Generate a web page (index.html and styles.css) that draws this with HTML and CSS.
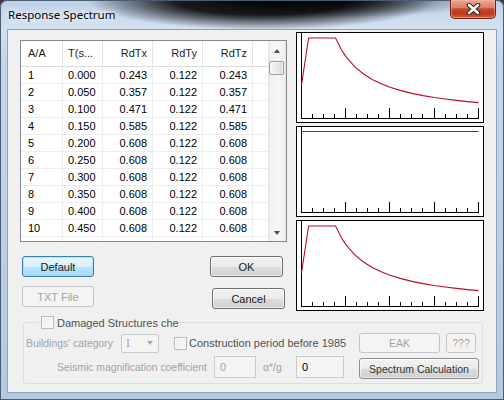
FILE: index.html
```html
<!DOCTYPE html>
<html lang="en">
<head>
  <meta charset="UTF-8" />
  <title>Response Spectrum</title>
  <link rel="stylesheet" href="styles.css">
</head>
<body>

<div class="window">
  <div class="titlebar">
    <span class="title">Response Spectrum</span>
    <div class="close-btn">
      <svg width="15" height="12" viewBox="0 0 15 12">
        <path d="M3 2 L12 10 M12 2 L3 10" stroke="#3b1a12" stroke-width="4.6" stroke-linecap="round"/>
        <path d="M3 2 L12 10 M12 2 L3 10" stroke="#fff" stroke-width="2.6" stroke-linecap="round"/>
      </svg>
    </div>
  </div>

  <div class="client">
    <div class="upper">
      <div class="left-col">

        <!-- spectrum values -->
        <div class="grid">
          <div class="grid-body">
            <div class="row head"><span>A/A</span><span>T(s...</span><span class="r">RdTx</span><span class="r">RdTy</span><span class="r">RdTz</span><span></span></div>
            <div class="row"><span>1</span><span>0.000</span><span class="r">0.243</span><span class="r">0.122</span><span class="r">0.243</span><span></span></div>
            <div class="row"><span>2</span><span>0.050</span><span class="r">0.357</span><span class="r">0.122</span><span class="r">0.357</span><span></span></div>
            <div class="row"><span>3</span><span>0.100</span><span class="r">0.471</span><span class="r">0.122</span><span class="r">0.471</span><span></span></div>
            <div class="row"><span>4</span><span>0.150</span><span class="r">0.585</span><span class="r">0.122</span><span class="r">0.585</span><span></span></div>
            <div class="row"><span>5</span><span>0.200</span><span class="r">0.608</span><span class="r">0.122</span><span class="r">0.608</span><span></span></div>
            <div class="row"><span>6</span><span>0.250</span><span class="r">0.608</span><span class="r">0.122</span><span class="r">0.608</span><span></span></div>
            <div class="row"><span>7</span><span>0.300</span><span class="r">0.608</span><span class="r">0.122</span><span class="r">0.608</span><span></span></div>
            <div class="row"><span>8</span><span>0.350</span><span class="r">0.608</span><span class="r">0.122</span><span class="r">0.608</span><span></span></div>
            <div class="row"><span>9</span><span>0.400</span><span class="r">0.608</span><span class="r">0.122</span><span class="r">0.608</span><span></span></div>
            <div class="row"><span>10</span><span>0.450</span><span class="r">0.608</span><span class="r">0.122</span><span class="r">0.608</span><span></span></div>
            <div class="row"><span></span><span></span><span></span><span></span><span></span><span></span></div>
          </div>
          <div class="vscroll">
            <div class="sb-btn"><span class="arrow-up"></span></div>
            <div class="thumb"></div>
            <div class="sb-track"></div>
            <div class="sb-btn"><span class="arrow-down"></span></div>
          </div>
        </div>

        <div class="btn-area">
          <div class="btn-col">
            <button class="btn default">Default</button>
            <button class="btn" disabled>TXT File</button>
          </div>
          <div class="btn-col right">
            <button class="btn ok">OK</button>
            <button class="btn cancel">Cancel</button>
          </div>
        </div>
      </div>

      <!-- plots: RdTx, RdTy, RdTz -->
      <div class="charts">
        <div class="chart">
          <svg width="186" height="89" viewBox="0 0 186 89">
            <path class="axis" d="M4.5 0V85.5H182"/>
            <path class="axis" d="M15.5 81V85M26.5 81V85M37.5 81V85M59.5 81V85M70.5 81V85M81.5 81V85M103.5 81V85M114.5 81V85M125.5 81V85M148.5 81V85M159.5 81V85M170.5 81V85"/>
            <path class="axis" d="M48.5 75V85M92.5 75V85M137.5 75V85M181.5 75V85"/>
            <polyline class="curve" points="4.5,52 11.6,5 38.6,5 44.3,16.5 48.75,23.4 57.6,33.7 66.45,41 75.3,46.5 84.15,50.8 93,54.2 104.1,57.6 115.1,60.4 126.2,62.6 137.25,64.5 148.3,66 159.4,67.4 170.4,68.6 181.5,69.6"/>
          </svg>
        </div>
        <div class="chart">
          <svg width="186" height="89" viewBox="0 0 186 89">
            <path class="axis" d="M4.5 0V85.5H182"/>
            <path class="axis" d="M15.5 81V85M26.5 81V85M37.5 81V85M59.5 81V85M70.5 81V85M81.5 81V85M103.5 81V85M114.5 81V85M125.5 81V85M148.5 81V85M159.5 81V85M170.5 81V85"/>
            <path class="axis" d="M48.5 75V85M92.5 75V85M137.5 75V85M181.5 75V85"/>
            <path class="curve" d="M4.5 4.5H181.5"/>
          </svg>
        </div>
        <div class="chart">
          <svg width="186" height="89" viewBox="0 0 186 89">
            <path class="axis" d="M4.5 0V85.5H182"/>
            <path class="axis" d="M15.5 81V85M26.5 81V85M37.5 81V85M59.5 81V85M70.5 81V85M81.5 81V85M103.5 81V85M114.5 81V85M125.5 81V85M148.5 81V85M159.5 81V85M170.5 81V85"/>
            <path class="axis" d="M48.5 75V85M92.5 75V85M137.5 75V85M181.5 75V85"/>
            <polyline class="curve" points="4.5,52 11.6,5 38.6,5 44.3,16.5 48.75,23.4 57.6,33.7 66.45,41 75.3,46.5 84.15,50.8 93,54.2 104.1,57.6 115.1,60.4 126.2,62.6 137.25,64.5 148.3,66 159.4,67.4 170.4,68.6 181.5,69.6"/>
          </svg>
        </div>
      </div>
    </div>

    <fieldset class="group">
      <legend><span class="check"></span><span class="legend-text">Damaged Structures che</span></legend>
      <div class="group-body">
        <div class="group-left">
          <div class="g-row first">
            <span class="lbl dis cat">Buildings' category</span>
            <div class="combo"><span>I</span><span class="combo-arrow"></span></div>
            <span class="check cp"></span>
            <span class="lbl">Construction period before 1985</span>
          </div>
          <div class="g-row second">
            <span class="lbl dis coef">Seismic magnification coefficient</span>
            <div class="field dis f1">0</div>
            <span class="lbl dis ag">α*/g</span>
            <div class="field f2">0</div>
          </div>
        </div>
        <div class="group-right">
          <div class="g-row first">
            <button class="btn small eak" disabled>EAK</button>
            <button class="btn small qq" disabled>???</button>
          </div>
          <div class="g-row second">
            <button class="btn small calc">Spectrum Calculation</button>
          </div>
        </div>
      </div>
    </fieldset>
  </div>
</div>

</body>
</html>
```

FILE: styles.css
```css
body {
  margin: 0;
  background: #3a3a3a;
  font-family: "Liberation Sans", Arial, sans-serif;
  font-size: 11px;
}

.window {
  width: 504px;
  height: 400px;
  box-sizing: border-box;
  padding: 0 7px 7px;
  border-radius: 7px 7px 0 0;
  overflow: hidden;
  background:
    radial-gradient(ellipse 175px 30px at 262px 0, rgba(0,0,0,.97) 0%, rgba(0,0,0,.88) 50%, rgba(0,0,0,0) 100%),
    radial-gradient(ellipse 140px 18px at 340px 0, rgba(0,0,0,.75) 0%, rgba(0,0,0,0) 100%),
    linear-gradient(to bottom, #bdd0e6 0, #d3e1f1 27px, #c3d6eb 60px, #b3c9e2 100%);
  box-shadow: inset 0 0 0 1px #4b5d73;
}

/* title bar */
.titlebar {
  height: 29px;
  display: flex;
  align-items: flex-start;
}

.title {
  margin: 7px 0 0 1px;
  font-family: "Noto Sans", sans-serif;
  font-size: 11.5px;
  color: #000;
  text-shadow: 0 0 8px #fff, 0 0 5px rgba(255,255,255,.9);
}

.close-btn {
  margin-left: auto;
  margin-right: 1px;
  width: 46px;
  height: 19px;
  box-sizing: border-box;
  border: 1px solid #6b2416;
  border-top: none;
  border-radius: 0 0 5px 5px;
  background: linear-gradient(#e9a895 0%, #d9806a 42%, #c6452a 50%, #bf3a1e 78%, #d5633e 100%);
  box-shadow: inset 0 0 0 1px rgba(255,190,170,.45);
  display: flex;
  align-items: center;
  justify-content: center;
}

/* client area */
.client {
  height: 364px;
  box-sizing: border-box;
  border: 1px solid #8ea3bb;
  background: #f0f0f0;
}

.upper {
  display: flex;
  align-items: flex-start;
}

.left-col {
  width: 267px;
  margin: 10px 0 0 12px;
}

/* list */
.grid {
  width: 267px;
  height: 202px;
  box-sizing: border-box;
  border: 1px solid #828790;
  background: #fff;
  display: flex;
}

.grid-body {
  width: 247px;
  overflow: hidden;
}

.row {
  display: grid;
  grid-template-columns: 42px 40px 50px 50px 50px 15px;
  height: 17px;
  box-sizing: border-box;
  border-bottom: 1px solid #ededed;
  color: #000;
}

.row > span {
  border-right: 1px solid #ededed;
  padding: 0 5px;
  line-height: 16px;
  white-space: nowrap;
  overflow: hidden;
}

.row > span:first-child {
  padding-left: 7px;
}

.row > span:last-child {
  border-right: none;
}

.row .r {
  text-align: right;
}

.row.head {
  height: 26px;
  border-bottom-color: #dcdcdc;
  color: #1e1e1e;
}

.row.head > span {
  line-height: 25px;
  border-right-color: #e5e5e5;
}

.vscroll {
  width: 18px;
  display: flex;
  flex-direction: column;
  background: linear-gradient(to right, #e4e4e4, #f1f1f1 2px, #f6f6f6 50%, #f1f1f1 16px, #e4e4e4);
}

.sb-btn {
  height: 17px;
  display: flex;
  align-items: center;
  justify-content: center;
}

.arrow-up, .arrow-down {
  width: 0;
  height: 0;
  border-left: 3.5px solid transparent;
  border-right: 3.5px solid transparent;
}

.arrow-up {
  border-bottom: 4px solid #4d4d4d;
  margin-top: 3px;
}

.arrow-down {
  border-top: 4px solid #4d4d4d;
}

.thumb {
  width: 15px;
  height: 14px;
  margin: 3px 0 0 1px;
  box-sizing: border-box;
  border: 1px solid #979797;
  border-radius: 2px;
  background: linear-gradient(to right, #f6f6f6, #e9e9e9 50%, #d9d9d9);
  box-shadow: inset 0 0 0 1px rgba(255,255,255,.7);
}

.sb-track {
  flex: 1;
}

/* buttons */
.btn {
  box-sizing: border-box;
  height: 21px;
  padding: 0;
  border: 1px solid #707070;
  border-radius: 3px;
  background: linear-gradient(#f2f2f2 0%, #ebebeb 50%, #dddddd 51%, #cfcfcf 100%);
  box-shadow: inset 0 0 0 1px rgba(255,255,255,.6);
  font-family: "Liberation Sans", Arial, sans-serif;
  font-size: 11px;
  color: #1a1a1a;
}

.btn.default {
  border-color: #3c7fb1;
  background: linear-gradient(#eaf6fd 0%, #d9f0fc 50%, #bee6fd 51%, #a7d9f5 100%);
  box-shadow: inset 0 0 0 1px rgba(140,220,250,.6);
}

.btn:disabled {
  border-color: #c2c5c8;
  background: #f4f4f4;
  box-shadow: none;
  color: #a3a3a3;
}

.btn-area {
  display: flex;
  margin-top: 14px;
}

.btn-col {
  display: flex;
  flex-direction: column;
  gap: 9px;
  margin-left: 2px;
}

.btn-col .btn {
  width: 72px;
}

.btn-col.right {
  margin-left: 116px;
  gap: 11px;
}

.btn-col.right .btn {
  width: 73px;
}

.btn.cancel {
  margin-left: 2px;
}

/* plots */
.charts {
  display: flex;
  flex-direction: column;
  gap: 3px;
  margin: 2px 0 0 9px;
}

.chart {
  width: 188px;
  height: 91px;
  box-sizing: border-box;
  border: 1px solid #000;
  background: #fff;
}

.chart svg {
  display: block;
}

.axis {
  fill: none;
  stroke: #000;
  stroke-width: 1;
  shape-rendering: crispEdges;
}

.curve {
  fill: none;
  stroke: #b80d26;
  stroke-width: 1.1;
}

/* damaged structures group */
.group {
  width: 460px;
  box-sizing: border-box;
  margin: 5px 0 0 15px;
  padding: 4px 0 5px 0;
  border: 1px solid #d5dfe5;
  border-radius: 3px;
  min-inline-size: 0;
}

.group legend {
  width: 134px;
  margin-left: 15px;
  padding: 0 2px;
  height: 13px;
  display: flex;
  align-items: center;
  white-space: nowrap;
}

.legend-text {
  margin-left: 3px;
  color: #505050;
}

.check {
  flex: none;
  width: 13px;
  height: 13px;
  box-sizing: border-box;
  border: 1px solid #bcbcbc;
  background: linear-gradient(135deg, #ececec, #fafafa);
  box-shadow: inset 0 0 0 1px #f7f7f7;
}

.group-body {
  display: flex;
}

.group-left {
  width: 335px;
}

.group-right {
  width: 120px;
}

.g-row {
  display: flex;
  align-items: center;
}

.g-row.first {
  height: 20px;
}

.g-row.second {
  height: 22px;
  margin-top: 3px;
}

.lbl {
  color: #505050;
  white-space: nowrap;
}

.lbl.dis {
  color: #a3a3a3;
  font-size: 10.4px;
}

.lbl.cat {
  width: 95px;
  margin-left: 2px;
}

.combo {
  width: 38px;
  height: 19px;
  box-sizing: border-box;
  border: 1px solid #c9c9c9;
  border-radius: 2px;
  background: #f4f4f4;
  display: flex;
  align-items: center;
  justify-content: space-between;
  padding: 0 5px 0 4px;
  font-family: "Liberation Serif", serif;
  font-size: 12px;
  color: #a3a3a3;
}

.combo-arrow {
  width: 0;
  height: 0;
  border-left: 3.5px solid transparent;
  border-right: 3.5px solid transparent;
  border-top: 4px solid #a8a8a8;
}

.check.cp {
  margin-left: 15px;
  margin-right: 2px;
}

.lbl.coef {
  width: 183px;
  text-align: right;
}

.field {
  height: 22px;
  box-sizing: border-box;
  border: 1px solid #cccccc;
  background: #f4f4f4;
  padding-left: 5px;
  line-height: 20px;
  color: #000;
}

.field.dis {
  color: #a3a3a3;
}

.field.f1 {
  width: 42px;
  margin-left: 7px;
}

.lbl.ag {
  width: 33px;
  margin-left: 7px;
}

.field.f2 {
  width: 48px;
}

.btn.small {
  height: 20px;
  font-size: 10.5px;
}

.btn.eak {
  width: 81px;
}

.btn.qq {
  width: 30px;
  margin-left: 6px;
}

.group-right .g-row.second {
  align-items: flex-start;
}

.btn.calc {
  width: 120px;
  height: 21px;
  margin-top: 2px;
  color: #333;
  border-color: #8e8e8e;
}
```
